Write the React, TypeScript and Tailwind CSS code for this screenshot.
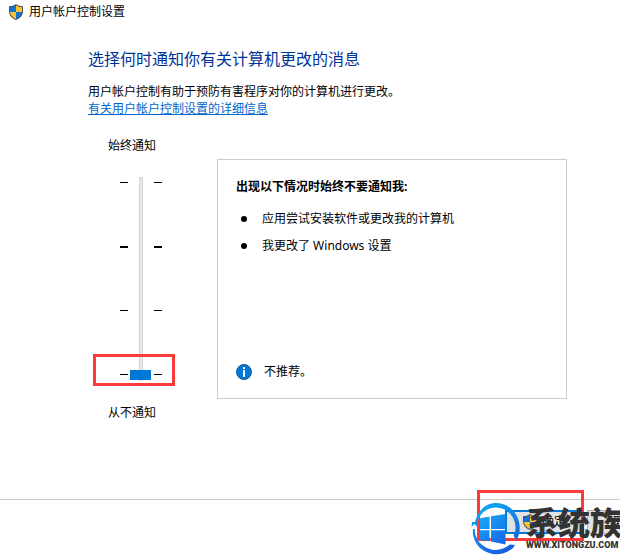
import { useState } from 'react'

const ticks = [3, 2, 1, 0]

function ShieldIcon() {
  return (
    <svg viewBox="0 0 16 16" className="size-4 shrink-0" aria-hidden="true">
      <path d="M8 0C6 1.6 3.8 2.2 1 2.3V7c0 4.200 2.600 7.200 7 9 4.400-1.800 7-4.800 7-9V2.300C12.200 2.200 10 1.600 8 0z" fill="#4d5358" />
      <path d="M8 1.200C6.300 2.500 4.400 3.100 2 3.300V8h6z" fill="#1173cf" />
      <path d="M8 1.200c1.700 1.300 3.600 1.900 6 2.100V8H8z" fill="#fbc02d" />
      <path d="M2 8c.3 3.100 2.400 5.400 6 7V8z" fill="#fbc02d" />
      <path d="M14 8c-.3 3.100-2.400 5.400-6 7V8z" fill="#1173cf" />
    </svg>
  )
}

function InfoIcon() {
  return (
    <svg viewBox="0 0 16 16" className="size-4 shrink-0" aria-hidden="true">
      <circle cx="8" cy="8" r="7.500" fill="#0078d7" stroke="#0b5a9c" />
      <rect x="7" y="3" width="2" height="2" fill="#fff" />
      <rect x="7" y="6" width="2" height="7" fill="#fff" />
    </svg>
  )
}

function BrandLogo() {
  return (
    <svg viewBox="0 0 52 52" className="size-[52px] shrink-0" aria-hidden="true">
      <defs>
        <linearGradient id="ring" gradientUnits="userSpaceOnUse" x1="10" y1="0" x2="40" y2="52">
          <stop offset="0" stopColor="#10aaf5" />
          <stop offset="1" stopColor="#1458dc" />
        </linearGradient>
        <linearGradient id="pane" gradientUnits="userSpaceOnUse" x1="10" y1="12" x2="35" y2="42">
          <stop offset="0" stopColor="#1aaaf5" />
          <stop offset="1" stopColor="#1263e6" />
        </linearGradient>
      </defs>
      <path d="M4 19C7 7 15 0 25 0c12 0 22 9 23.500 22 .7 6-.5 11-3 15l-3-4c2-4 2.500-8 1.500-13C42 11 34 4.500 25 4.500 16 4.500 9 10 6.500 19L7 24l-4-3-2.500 3.500L1 19z" fill="url(#ring)" />
      <path d="M2 26c-1 8 3 16 9 20.500 10 7 22 6 31-1.500l2-3-5-.5C31 48 20 49 12 42.500 6 38 3.500 32 4 26z" fill="url(#ring)" />
      <path d="M9 15.200l9.500-1.700V26H9zM20 13.200L34.500 11v15H20zM9 27.200h9.500v11L9 37zM20 27.200h14.500v14.300L20 38.600z" fill="url(#pane)" />
    </svg>
  )
}

function Watermark() {
  return (
    <div className="pointer-events-none absolute top-[3px] right-0 flex w-[149px] items-center gap-[3px] overflow-hidden text-[#333]">
      <BrandLogo />
      <div className="flex flex-col whitespace-nowrap">
        <span className="text-[32px] leading-8 font-black">系统族</span>
        <span className="font-['Roboto',sans-serif] text-[9px] leading-3 font-black">WWW.XITONGZU.COM</span>
      </div>
    </div>
  )
}

function TickMarks() {
  return (
    <div className="flex h-[204px] flex-col justify-between pt-[5px] pb-[6px]">
      {ticks.map((t) => (
        <span key={t} className={t === 2 ? 'h-0.5 w-2 bg-black' : 'h-px w-2 bg-black'} />
      ))}
    </div>
  )
}

export default function App() {
  const [level, setLevel] = useState(0)

  return (
    <div className="flex min-h-screen flex-col overflow-hidden bg-white font-['Noto_Sans','Noto_Sans_CJK_SC',sans-serif] text-xs text-black">
      <header className="flex items-center gap-[5px] px-2 pt-1">
        <ShieldIcon />
        <span>用户帐户控制设置</span>
      </header>

      <main className="flex flex-col pt-[27px] pr-[53px] pb-10 pl-[88px]">
        <h1 className="text-base leading-6 text-[#003399]">选择何时通知你有关计算机更改的消息</h1>
        <p className="mt-3 leading-[17px]">用户帐户控制有助于预防有害程序对你的计算机进行更改。</p>
        <a href="#details" className="self-start leading-[17px] text-[#0066cc] underline">
          有关用户帐户控制设置的详细信息
        </a>

        <div className="mt-[21px] flex">
          <div className="ml-5 flex w-[109px] shrink-0 flex-col items-start">
            <label htmlFor="level" className="leading-4">始终通知</label>
            <div className="relative mt-[23px] ml-3 flex gap-[2px]">
              <TickMarks />
              <input
                id="level"
                type="range"
                min={0}
                max={3}
                value={level}
                onChange={(e) => setLevel(Number(e.target.value))}
                className="h-[204px] w-[22px] appearance-none bg-transparent [direction:rtl] [writing-mode:vertical-lr] [&::-webkit-slider-runnable-track]:w-1 [&::-webkit-slider-runnable-track]:border [&::-webkit-slider-runnable-track]:border-[#d3d6d6] [&::-webkit-slider-runnable-track]:bg-[#e7eaea] [&::-webkit-slider-thumb]:-ml-[10px] [&::-webkit-slider-thumb]:h-[10px] [&::-webkit-slider-thumb]:w-[21px] [&::-webkit-slider-thumb]:appearance-none [&::-webkit-slider-thumb]:bg-[#0078d7]"
              />
              <TickMarks />
              <div className="pointer-events-none absolute -right-[13px] -bottom-[5px] -left-[27px] h-8 border-3 border-[#fc3a3a]" />
            </div>
            <span className="mt-6 leading-4">从不通知</span>
          </div>

          <section className="mt-[21px] flex h-[240px] flex-1 flex-col border border-[#cccccc] px-[18px] pt-[19px] pb-[18px]">
            <h2 className="leading-4 font-bold">出现以下情况时始终不要通知我:</h2>
            <ul className="mt-4 flex flex-col gap-[11px] pl-[5px]">
              <li className="flex items-center gap-[15px] leading-4">
                <span className="size-1.5 rounded-full bg-black" />
                应用尝试安装软件或更改我的计算机
              </li>
              <li className="flex items-center gap-[15px] leading-4">
                <span className="size-1.5 rounded-full bg-black" />
                我更改了 Windows 设置
              </li>
            </ul>
            <p className="mt-auto flex items-center gap-3 leading-4">
              <InfoIcon />
              不推荐。
            </p>
          </section>
        </div>
      </main>

      <footer className="relative mt-auto h-[58px] border-t border-[#c8c8c8]">
        <div className="-mr-[43px] flex justify-end gap-1 pt-[10px]">
          <button className="flex h-6 w-[78px] items-center justify-center gap-1 border-2 border-[#0078d7] bg-[#e1e1e1]">
            <ShieldIcon />
            确定
          </button>
          <button className="h-6 w-[76px] border border-[#adadad] bg-[#e1e1e1]">取消</button>
        </div>
        <div className="pointer-events-none absolute -top-[10px] right-9 h-[51px] w-[107px] border-3 border-[#fc3a3a]" />
        <Watermark />
      </footer>
    </div>
  )
}
